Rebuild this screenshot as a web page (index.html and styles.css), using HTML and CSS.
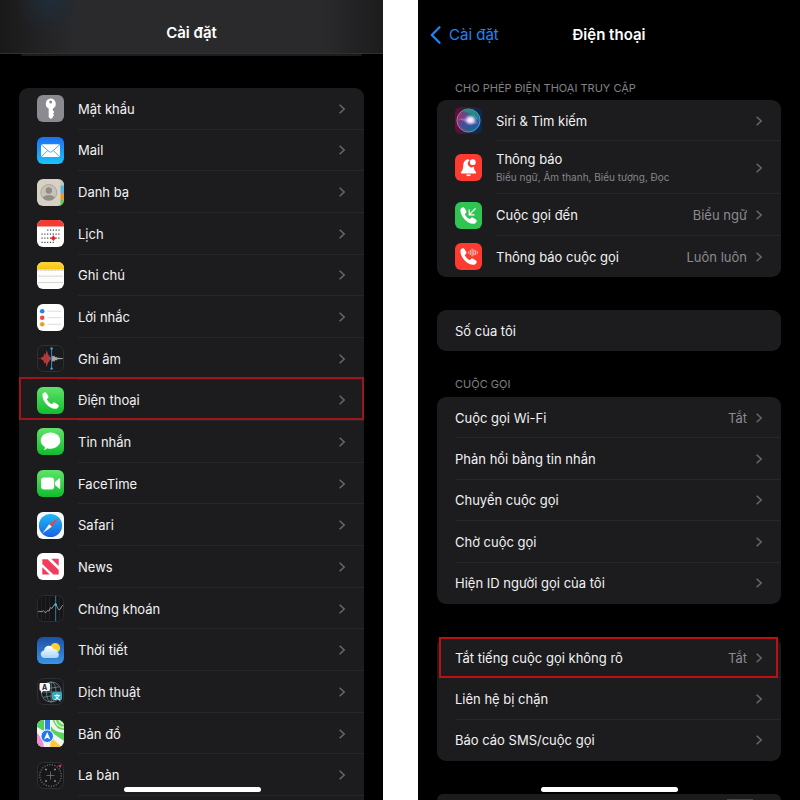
FILE: index.html
```html
<!DOCTYPE html>
<html lang="vi">
<head>
<meta charset="utf-8">
<meta name="viewport" content="width=device-width, initial-scale=1">
<title>Cài đặt – Điện thoại</title>
<link rel="stylesheet" href="styles.css">
</head>
<body>
<svg class="defs" aria-hidden="true">
  <defs>
    <symbol id="chevron" viewBox="0 0 8 12"><path d="M1.6 1.8 6.2 6 1.6 10.2" fill="none" stroke="currentColor" stroke-width="1.5"/></symbol>
    <symbol id="handset" viewBox="0 0 27 27"><path d="M5.4 8.2C5.3 6.7 6.6 5.5 7.8 5.2c.8-.2 1.400.3 1.800 1l1.700 2.700c.4.7.3 1.300-.2 1.900l-.9 1c-.3.4-.3.8 0 1.300.8 1.400 2.200 2.800 3.700 3.700.5.3.9.3 1.300-.1l1-.9c.6-.5 1.200-.5 1.900-.1l2.800 1.800c.7.5 1 1.100.7 1.900-.5 1.300-1.900 2.500-3.400 2.400C11.700 21.500 5.700 14.600 5.400 8.200z" fill="#fff"/></symbol>
    <linearGradient id="green" x2="0" y2="1"><stop stop-color="#5fe36b"/><stop offset="1" stop-color="#11bd2c"/></linearGradient>
    <linearGradient id="mail" x2="0" y2="1"><stop stop-color="#1d6ff2"/><stop offset="1" stop-color="#19c4fb"/></linearGradient>
    <linearGradient id="note" x2="0" y2="1"><stop stop-color="#fbd53f"/><stop offset="1" stop-color="#f8c40c"/></linearGradient>
    <linearGradient id="safari" x2="0" y2="1"><stop stop-color="#1fb9f8"/><stop offset="1" stop-color="#1a62df"/></linearGradient>
    <linearGradient id="sky" x2="0" y2="1"><stop stop-color="#1c51a8"/><stop offset="1" stop-color="#3b94e4"/></linearGradient>
    <linearGradient id="cloud" x2="0" y2="1"><stop stop-color="#fff"/><stop offset="1" stop-color="#a9d4fa"/></linearGradient>
    <linearGradient id="siriBack"><stop stop-color="#6b0c38"/><stop offset=".5" stop-color="#1f2140"/><stop offset="1" stop-color="#062d50"/></linearGradient>
    <linearGradient id="siriBall" x2="1" y2=".2"><stop stop-color="#b52468"/><stop offset=".4" stop-color="#5c4e8a"/><stop offset=".7" stop-color="#1f6b83"/><stop offset="1" stop-color="#1965b8"/></linearGradient>
    <radialGradient id="siriGlow"><stop stop-color="#fff"/><stop offset=".4" stop-color="#f2ecff" stop-opacity=".85"/><stop offset="1" stop-color="#b5a0ff" stop-opacity="0"/></radialGradient>
    <clipPath id="tile"><rect width="27" height="27" rx="6"/></clipPath>
  </defs>
</svg>

<main class="screens">
  <section class="phone phone--settings" aria-label="Cài đặt">
    <header class="bar bar--blurred"><h1>Cài đặt</h1></header>
    <div class="previous"></div>
    <nav class="card card--apps">
      <a class="row" href="#"><svg class="icon" viewBox="0 0 27 27"><rect width="27" height="27" rx="6" fill="#8b8a90"/><path fill="#fff" fill-rule="evenodd" d="M13.700 3.600a5.300 5.300 0 0 1 2.200 10v2l1.500 1.500-1.500 1.700 1.300 1.300-1.400 1.500v.8l-1.900 1.600-2.200-1.700v-8.700a5.300 5.300 0 0 1 2-10zm0 2a1.500 1.500 0 1 0 0 3 1.500 1.500 0 0 0 0-3z"/></svg><span class="name">Mật khẩu</span><svg class="chevron"><use href="#chevron"/></svg></a>
      <a class="row" href="#"><svg class="icon" viewBox="0 0 27 27"><rect width="27" height="27" rx="6" fill="url(#mail)"/><rect x="4" y="7.300" width="19" height="12.800" rx="1.800" fill="#fff"/><path d="m4.600 8 7.500 6.600q1.400 1.100 2.800 0L22.400 8M4.700 19.500l6-6M22.300 19.500l-6-6" fill="none" stroke="#4b9bea" stroke-width=".9"/></svg><span class="name">Mail</span><svg class="chevron"><use href="#chevron"/></svg></a>
      <a class="row" href="#"><svg class="icon" viewBox="0 0 27 27"><g clip-path="url(#tile)"><rect width="27" height="27" fill="#d6d1c4"/><path d="M23.500 0H27v6.500h-3.500z" fill="#c9c5ba"/><path d="M23.500 6.500H27V14h-3.500z" fill="#55b5df"/><path d="M23.500 14H27v6.500h-3.500z" fill="#f1952f"/><path d="M23.500 20.500H27V27h-3.500z" fill="#59c951"/><circle cx="11.800" cy="13.500" r="8" fill="#c8c3b7" stroke="#a19d93" stroke-width=".8"/><circle cx="11.800" cy="11.500" r="3.200" fill="#918e87"/><path d="M5.800 18.700c2-3.500 10-3.500 12 0-3 3.500-9 3.500-12 0z" fill="#918e87"/></g></svg><span class="name">Danh bạ</span><svg class="chevron"><use href="#chevron"/></svg></a>
      <a class="row" href="#"><svg class="icon" viewBox="0 0 27 27"><g clip-path="url(#tile)"><rect width="27" height="27" fill="#fff"/><rect width="27" height="6.500" fill="#f33b30"/><g fill="none" stroke="#45454a" stroke-width="1.200" stroke-dasharray="1.200 1.600"><path d="M10.200 10.200H23M4.500 14.200H23M4.500 18.200H23M4.500 22.300h12.300"/></g><path d="M13.500 18.200h5.500M16.300 15.500v5.400" stroke="#e4222a" stroke-width="1"/><circle cx="16.300" cy="18.200" r="1.900" fill="#e4222a"/></g></svg><span class="name">Lịch</span><svg class="chevron"><use href="#chevron"/></svg></a>
      <a class="row" href="#"><svg class="icon" viewBox="0 0 27 27"><g clip-path="url(#tile)"><rect width="27" height="27" fill="#fdfdfb"/><rect width="27" height="7.500" fill="url(#note)"/><path d="M0 8.300h27" stroke="#9a9169" stroke-width=".6" stroke-dasharray=".7 .7"/><path d="M1 14.200h25M1 20.500h25" stroke="#cdcdcb" stroke-width=".8"/></g></svg><span class="name">Ghi chú</span><svg class="chevron"><use href="#chevron"/></svg></a>
      <a class="row" href="#"><svg class="icon" viewBox="0 0 27 27"><rect width="27" height="27" rx="6" fill="#fff"/><circle cx="5.200" cy="7.200" r="2.300" fill="#2884e6"/><circle cx="5.200" cy="13.700" r="2.300" fill="#ea4b3c"/><circle cx="5.200" cy="20.300" r="2.300" fill="#f29c2c"/><path d="M10.500 7.200H24M10.500 13.700H24M10.500 20.300H24" stroke="#d3d3d6" stroke-width=".8"/></svg><span class="name">Lời nhắc</span><svg class="chevron"><use href="#chevron"/></svg></a>
      <a class="row" href="#"><svg class="icon" viewBox="0 0 27 27"><rect x=".5" y=".5" width="26" height="26" rx="6" fill="#1b1b1d" stroke="#303034"/><path d="M1.500 13.200h2.500l1-1.500 1 .5 1.500-4 1 1.500 1.200-4.700 1.400 4.500 1.100 1 1 2 1.400-1v4l-1.400-1-1 2-1.100 1-1.400 4.500-1.200-4.700-1 1.500-1.500-4-1 .5-1-1.500H1.500z" fill="#b23a3a"/><path d="M15 10.500l1.200 1 1-1 1 1.700 1-.5 1 1 1.300 0 4.500.6v.6l-4.500.4-1.300.2-1 1-1-.5-1 1.700-1-1-1.200 1.300z" fill="#a8a8ac"/><path d="M14.600 3.500v20.500" stroke="#2f8fcb" stroke-width="1"/><circle cx="14.600" cy="3.500" r="1.200" fill="#35a8ef"/><circle cx="14.600" cy="23.600" r="1.200" fill="#35a8ef"/></svg><span class="name">Ghi âm</span><svg class="chevron"><use href="#chevron"/></svg></a>
      <a class="row row--marked" href="#"><svg class="icon" viewBox="0 0 27 27"><rect width="27" height="27" rx="6" fill="url(#green)"/><use href="#handset"/></svg><span class="name">Điện thoại</span><svg class="chevron"><use href="#chevron"/></svg></a>
      <a class="row" href="#"><svg class="icon" viewBox="0 0 27 27"><rect width="27" height="27" rx="6" fill="url(#green)"/><path d="M13.500 4.500c5.500 0 9.800 3.600 9.800 8.100s-4.300 8.200-9.800 8.200c-1.200 0-2.200-.1-3.200-.5-.8.9-2 1.500-3.500 1.700.8-.9 1.200-1.700 1.200-2.800-2.600-1.500-4.300-3.900-4.300-6.600 0-4.500 4.300-8.100 9.800-8.100z" fill="#fff"/></svg><span class="name">Tin nhắn</span><svg class="chevron"><use href="#chevron"/></svg></a>
      <a class="row" href="#"><svg class="icon" viewBox="0 0 27 27"><rect width="27" height="27" rx="6" fill="url(#green)"/><rect x="4" y="7.500" width="13.200" height="12" rx="3" fill="#fff"/><path d="m18 12 4-3.500q1.200-.7 1.200.6v8.800q0 1.300-1.200.6L18 15z" fill="#fff"/></svg><span class="name">FaceTime</span><svg class="chevron"><use href="#chevron"/></svg></a>
      <a class="row" href="#"><svg class="icon" viewBox="0 0 27 27"><rect width="27" height="27" rx="6" fill="#f7f8fa"/><circle cx="13.500" cy="13.500" r="11.600" fill="url(#safari)"/><path d="m21.500 5.700-9.300 6.500 2.600 2.600z" fill="#ee4440"/><path d="m5.500 21.300 6.700-9.100 2.600 2.600z" fill="#f7f7f7"/></svg><span class="name">Safari</span><svg class="chevron"><use href="#chevron"/></svg></a>
      <a class="row" href="#"><svg class="icon" viewBox="0 0 27 27"><rect width="27" height="27" rx="6" fill="#fff"/><path d="M5.300 6.300h5.300L21.700 17v4.500h-5.300L5.300 11z" fill="#f43b5c"/><path d="M14.300 5.800h7.400v7.300z" fill="#f43b5c"/><path d="M5.300 14.300v7.200h7.400z" fill="#f43b5c"/></svg><span class="name">News</span><svg class="chevron"><use href="#chevron"/></svg></a>
      <a class="row" href="#"><svg class="icon" viewBox="0 0 27 27"><rect x=".5" y=".5" width="26" height="26" rx="6" fill="#151517" stroke="#2c2c30"/><path d="M4.500 2v23M8.500 2v23M12.500 2v23M22.500 2v23" stroke="#29292d" stroke-width=".7"/><path d="M18.600 1v25" stroke="#2a6f87" stroke-width="1.200"/><path d="m1 17 2-1 1 1 2.500-1.300L8.500 18l2-2.500 1.500.5 1.500-3.500 1.500 1 2-3.500 2-1 1.500 4 1.500 2 1.500-1 1-2.500L26 10" fill="none" stroke="#aeb0b4" stroke-width=".8"/><circle cx="18.600" cy="9.500" r="1.300" fill="#42bddf"/></svg><span class="name">Chứng khoán</span><svg class="chevron"><use href="#chevron"/></svg></a>
      <a class="row" href="#"><svg class="icon" viewBox="0 0 27 27"><rect width="27" height="27" rx="6" fill="url(#sky)"/><circle cx="18.200" cy="11" r="4.900" fill="#fbd130"/><path d="M8 21c-5.400 0-5.600-7-1-7.500.3-5.800 8-6.400 9.400-1.500 2.600-.5 4.200 1.400 4 3.200 2.300.9 2 5.800-1.400 5.800z" fill="url(#cloud)"/></svg><span class="name">Thời tiết</span><svg class="chevron"><use href="#chevron"/></svg></a>
      <a class="row" href="#"><svg class="icon" viewBox="0 0 27 27"><rect x=".5" y=".5" width="26" height="26" rx="6" fill="#1b1b1d" stroke="#303034"/><g fill="none" stroke="#6c8b92" stroke-width=".8"><circle cx="14.200" cy="14" r="10"/><ellipse cx="14.200" cy="14" rx="4.800" ry="10"/><path d="M14.200 4v20M4.200 14h20M6.500 8.800q7.700 2.600 15.400 0M6.500 19.200q7.700-2.600 15.400 0"/></g><path d="M3.500 5h8a1.500 1.500 0 0 1 1.500 1.500v5a1.500 1.500 0 0 1-1.500 1.500H6l-2 2v-2.200a1.500 1.500 0 0 1-1.500-1.300v-5A1.500 1.500 0 0 1 3.500 5z" fill="#f4f7f8"/><path d="M16.500 14h7a1.500 1.500 0 0 1 1.500 1.500v5a1.500 1.500 0 0 1-1.500 1.500v2.200L21.300 22h-4.800a1.500 1.500 0 0 1-1.500-1.500v-5a1.500 1.500 0 0 1 1.500-1.500z" fill="#3aa9bc"/><text class="glyph" x="7.700" y="11.500" fill="#222">A</text><text class="glyph glyph--cjk" x="20" y="20.500" fill="#fff">文</text></svg><span class="name">Dịch thuật</span><svg class="chevron"><use href="#chevron"/></svg></a>
      <a class="row" href="#"><svg class="icon" viewBox="0 0 27 27"><g clip-path="url(#tile)"><rect width="27" height="27" fill="#f3f4f2"/><path d="M0 0h7v11L0 7z" fill="#4fd257"/><path d="M15.500 0H27v10q-8 0-11.500-10z" fill="#69d45f"/><path d="M18 0q2 7 9 7.500M22 0q1 3.500 5 3.800" fill="none" stroke="#d8f3d2" stroke-width="1.500"/><path d="M14 6v6l13 9V13Q17 12 14 6z" fill="#56d45d"/><path d="M0 13q6 6 7 14H0z" fill="#ee8ed2"/><path d="M14 17.500 25 27H13z" fill="#f9c93d"/><path d="M8 0h5v13H8z" fill="#2a7de9"/><circle cx="10.200" cy="16.200" r="6.300" fill="#1f78ed" stroke="#fff" stroke-width="1"/><path d="m10.200 12 3.200 7.600-3.200-1.800L7 19.600z" fill="#fff"/></g></svg><span class="name">Bản đồ</span><svg class="chevron"><use href="#chevron"/></svg></a>
      <a class="row" href="#"><svg class="icon" viewBox="0 0 27 27"><rect x=".5" y=".5" width="26" height="26" rx="6" fill="#171719" stroke="#303034"/><circle cx="13.500" cy="13.500" r="10.800" fill="none" stroke="#77777b" stroke-width="1.300" stroke-dasharray="1 1.600"/><path d="M9.500 13.500h8M13.500 9.500v8" stroke="#77777b" stroke-width=".8"/><path d="M8 7.500h2M17 7.500h2M8 19h2M17 19h2" stroke="#88888c" stroke-width="1.500"/><path d="m21 3.500 3.400-1-.8 3.400z" fill="#f3344c"/></svg><span class="name">La bàn</span><svg class="chevron"><use href="#chevron"/></svg></a>
    </nav>
    <div class="home"></div>
  </section>

  <section class="phone phone--detail" aria-label="Điện thoại">
    <header class="bar">
      <a class="back" href="#"><svg viewBox="0 0 11 18"><path d="M9.500 1.200 1.800 9l7.700 7.800" fill="none" stroke="currentColor" stroke-width="2.200" stroke-linecap="round" stroke-linejoin="round"/></svg><span>Cài đặt</span></a>
      <h1>Điện thoại</h1>
    </header>

    <h2 class="label label--first">CHO PHÉP ĐIỆN THOẠI TRUY CẬP</h2>
    <nav class="card card--access">
      <a class="row" href="#"><svg class="icon" viewBox="0 0 27 27"><rect width="27" height="27" rx="6" fill="url(#siriBack)"/><circle cx="13.500" cy="13.500" r="11.600" fill="url(#siriBall)" stroke="#93a6b5" stroke-width=".7"/><path d="M7 4q7-4.500 13 .5 4.500 4 3 9-6-8-16-9.500z" fill="#1e977f" opacity=".8"/><path d="M3 15q8-5 20 0-4 8-11 7-7-1-9-7z" fill="#314ea4" opacity=".6"/><path d="M3 12q9-2 20 4-7 2-12-1-4-2-8-3z" fill="#e35cae" opacity=".7"/><ellipse cx="15.500" cy="13" rx="7" ry="6" fill="url(#siriGlow)"/></svg><span class="name">Siri &amp; Tìm kiếm</span><svg class="chevron"><use href="#chevron"/></svg></a>
      <a class="row" href="#"><svg class="icon" viewBox="0 0 27 27"><rect width="27" height="27" rx="6" fill="#fd3b31"/><path d="M13.500 5.300c-3.700.2-5 2.800-5.200 6-.2 3.500-.6 5-2 6.500-.8.900-.5 1.800.5 1.800h13.400c1 0 1.300-.9.500-1.800-1.200-1.300-1.700-2.600-1.900-5.200a3.700 3.700 0 0 1-4.300-6.200q-.4-.8-1-1.100zM11 20.500h5c-.5 2.300-4.500 2.300-5 0z" fill="#fff"/><circle cx="17.800" cy="8.200" r="2.900" fill="#fff"/></svg><span class="name">Thông báo<small>Biểu ngữ, Âm thanh, Biểu tượng, Đọc</small></span><svg class="chevron"><use href="#chevron"/></svg></a>
      <a class="row" href="#"><svg class="icon" viewBox="0 0 27 27"><rect width="27" height="27" rx="6" fill="#30c552"/><use href="#handset"/><path d="m20.500 6.500-6 6M14.200 7.500v5.300h5.300" fill="none" stroke="#fff" stroke-width="1.200"/></svg><span class="name">Cuộc gọi đến</span><span class="value">Biểu ngữ</span><svg class="chevron"><use href="#chevron"/></svg></a>
      <a class="row" href="#"><svg class="icon" viewBox="0 0 27 27"><rect width="27" height="27" rx="6" fill="#fd3b31"/><use href="#handset"/><path d="M13.500 8.500v2M15.300 7v5M17.100 5.500v8M18.900 6.500v6M20.700 7v5M22.500 8.500v2" stroke="#ffc4bf" stroke-width="1"/></svg><span class="name">Thông báo cuộc gọi</span><span class="value">Luôn luôn</span><svg class="chevron"><use href="#chevron"/></svg></a>
    </nav>

    <nav class="card card--number"><a class="row" href="#"><span class="name">Số của tôi</span></a></nav>

    <h2 class="label">CUỘC GỌI</h2>
    <nav class="card card--calls">
      <a class="row" href="#"><span class="name">Cuộc gọi Wi-Fi</span><span class="value">Tắt</span><svg class="chevron"><use href="#chevron"/></svg></a>
      <a class="row" href="#"><span class="name">Phản hồi bằng tin nhắn</span><svg class="chevron"><use href="#chevron"/></svg></a>
      <a class="row" href="#"><span class="name">Chuyển cuộc gọi</span><svg class="chevron"><use href="#chevron"/></svg></a>
      <a class="row" href="#"><span class="name">Chờ cuộc gọi</span><svg class="chevron"><use href="#chevron"/></svg></a>
      <a class="row" href="#"><span class="name">Hiện ID người gọi của tôi</span><svg class="chevron"><use href="#chevron"/></svg></a>
    </nav>

    <nav class="card card--blocking">
      <a class="row row--marked" href="#"><span class="name">Tắt tiếng cuộc gọi không rõ</span><span class="value">Tắt</span><svg class="chevron"><use href="#chevron"/></svg></a>
      <a class="row" href="#"><span class="name">Liên hệ bị chặn</span><svg class="chevron"><use href="#chevron"/></svg></a>
      <a class="row" href="#"><span class="name">Báo cáo SMS/cuộc gọi</span><svg class="chevron"><use href="#chevron"/></svg></a>
    </nav>

    <div class="card card--next"><span class="switch"></span></div>
    <div class="home"></div>
  </section>
</main>
</body>
</html>
```

FILE: styles.css
```css
* {
  box-sizing: border-box;
}

body {
  margin: 0;
  background: #fff;
  color: #f2f2f4;
  font: 13px/18px Inter, "Noto Sans", sans-serif;
}

.defs {
  position: absolute;
  width: 0;
  height: 0;
}

.screens {
  display: grid;
  grid-template-columns: 383fr 382fr;
  column-gap: 35px;
  min-height: 100vh;
}

.phone {
  position: relative;
  display: flex;
  flex-direction: column;
  overflow: hidden;
  background: #000;
}

.bar {
  position: relative;
  display: flex;
  align-items: center;
  justify-content: center;
  height: 70px;
}

.bar--blurred {
  height: 54px;
  padding-top: 12px;
  border-bottom: 1px solid #303032;
  background:
    radial-gradient(circle at 50px 0, #1f2c38 0, transparent 34px),
    linear-gradient(90deg, #19191a, #2a2a2c 20%, #2a2a2c 84%, #1c1c1d);
}

h1 {
  margin: 0;
  color: #fff;
  font-size: 15px;
  font-weight: 600;
  line-height: 20px;
}

.back {
  position: absolute;
  left: 12px;
  display: flex;
  align-items: center;
  gap: 8px;
  color: #2085f5;
  font-size: 15px;
  text-decoration: none;
}

.back svg {
  width: 11px;
  height: 18px;
}

.previous {
  height: 2px;
  margin: 0 21px 32px;
  border-radius: 0 0 8px 8px;
  background: #1c1c1e;
}

.card {
  display: grid;
  grid-auto-rows: 1fr;
  margin: 0 19px;
  border-radius: 9px;
  background: #1c1c1e;
}

.card--apps {
  flex: 1;
  padding-bottom: 4px;
  border-radius: 9px 9px 0 0;
}

.card--access {
  grid-template-rows: 41px 53px 42px 41px;
  margin-bottom: 33px;
}

.card--number {
  min-height: 41px;
}

.card--calls {
  min-height: 207px;
  margin-bottom: 33px;
}

.card--blocking {
  min-height: 124px;
}

.card--next {
  flex: 1;
  justify-items: end;
  margin-top: 33px;
  padding: 5px 28px 0;
  border-radius: 9px 9px 0 0;
}

.switch {
  width: 26px;
  height: 1px;
  background: #245c30;
}

.label {
  margin: 0;
  padding: 26px 37px 6px;
  color: #808086;
  font-size: 11px;
  font-weight: 400;
  line-height: 14px;
}

.label--first {
  padding-top: 11px;
  padding-bottom: 5px;
}

.row {
  position: relative;
  display: flex;
  align-items: center;
  padding: 0 18px;
  color: inherit;
  text-decoration: none;
}

.row::before {
  content: "";
  position: absolute;
  right: 0;
  bottom: 0;
  left: 18px;
  height: 1px;
  background: #272729;
}

.row:has(.icon)::before {
  left: 59px;
}

.phone--detail .row:last-child::before {
  display: none;
}

.row--marked::after {
  content: "";
  position: absolute;
  z-index: 1;
  inset: -3px 0 1px;
  border: 2px solid #a01519;
}

.phone--detail .row--marked::after {
  inset: 0 3px 0 2px;
  border-color: #bd1015;
}

.icon {
  flex: none;
  width: 27px;
  height: 27px;
  margin-right: 14px;
}

.name {
  flex: 1;
}

.name small {
  display: block;
  color: #85858b;
  font-size: 10px;
}

.value {
  margin-right: 8px;
  color: #8b8b91;
}

.chevron {
  flex: none;
  width: 8px;
  height: 12px;
  color: #68686c;
}

.glyph {
  font-size: 7px;
  font-weight: 700;
  text-anchor: middle;
}

.glyph--cjk {
  font-family: "Noto Sans CJK SC", sans-serif;
  font-size: 6px;
}

.home {
  position: absolute;
  bottom: 8px;
  left: 50%;
  width: 137px;
  height: 5px;
  margin-left: -68px;
  border-radius: 3px;
  background: #fff;
}
```
